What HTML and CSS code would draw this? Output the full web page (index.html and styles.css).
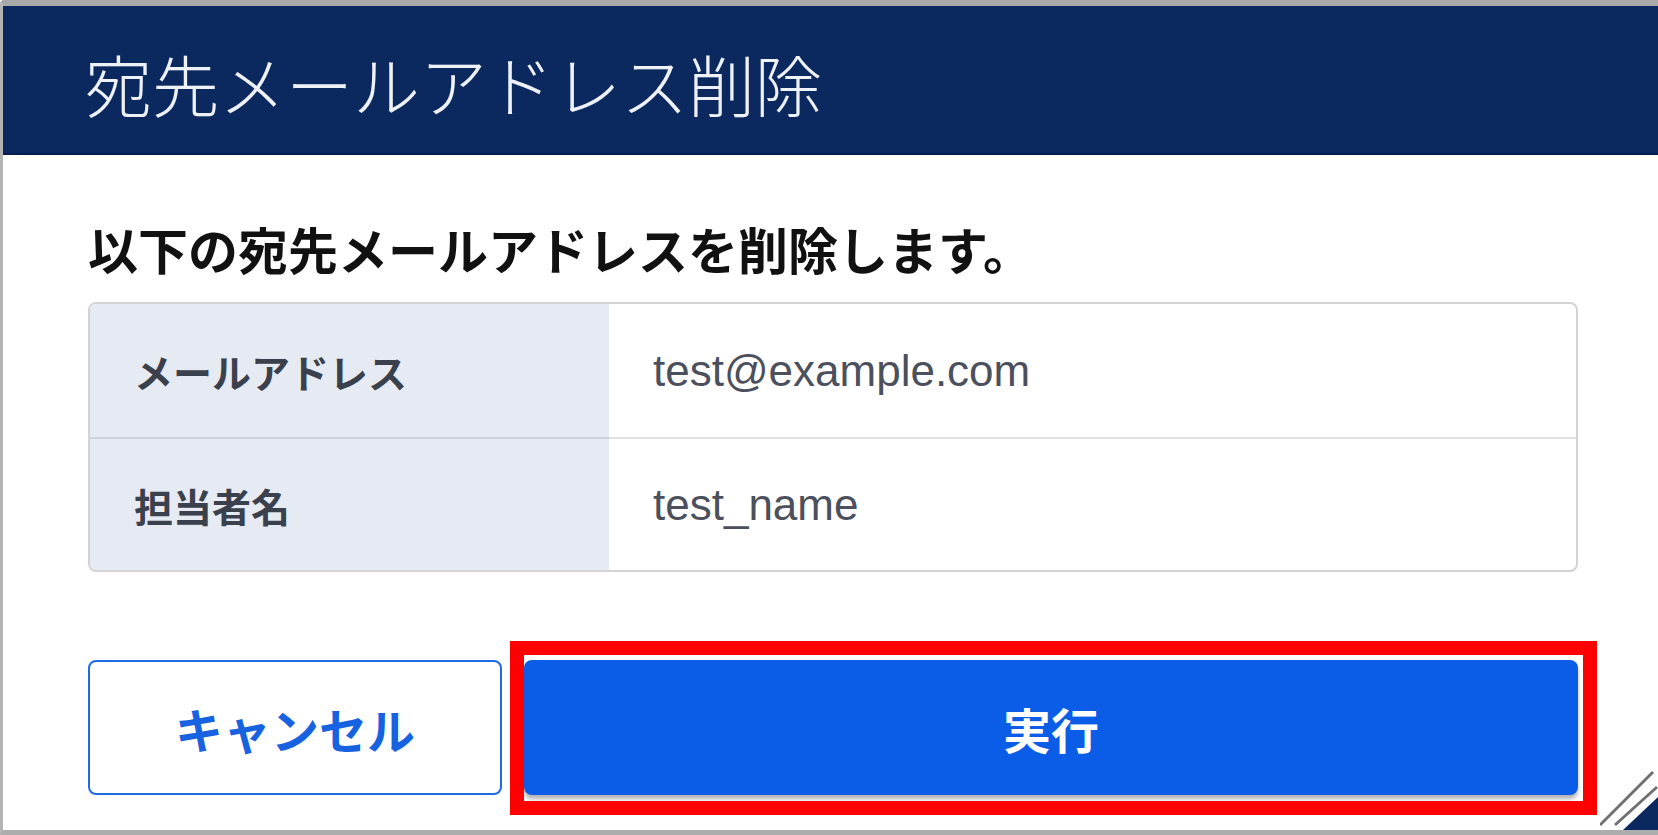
FILE: index.html
```html
<!DOCTYPE html>
<html lang="ja">
<head>
  <meta charset="UTF-8">
  <title>宛先メールアドレス削除</title>
  <link rel="stylesheet" href="styles.css">
</head>
<body>
  <div class="window">
    <div class="dialog-header">
      <h1>宛先メールアドレス削除</h1>
    </div>

    <div class="dialog-body">
      <p class="lead">以下の宛先メールアドレスを削除します。</p>

      <div class="info-table">
        <div class="info-row">
          <div class="info-label">メールアドレス</div>
          <div class="info-value">test@example.com</div>
        </div>
        <div class="info-row">
          <div class="info-label">担当者名</div>
          <div class="info-value">test_name</div>
        </div>
      </div>

      <div class="actions">
        <button class="btn btn-cancel">キャンセル</button>
        <div class="btn-wrap">
          <button class="btn btn-run">実行</button>
          <span class="mark"></span>
        </div>
      </div>
    </div>

    <svg class="grip" width="58" height="60" viewBox="0 0 58 60">
      <line x1="0" y1="55" x2="53" y2="2" stroke="#707070" stroke-width="3"/>
      <line x1="15" y1="55" x2="57" y2="17" stroke="#707070" stroke-width="3"/>
      <polygon points="23,60 58,60 58,27" fill="#0b295f"/>
    </svg>
  </div>
</body>
</html>
```

FILE: styles.css
```css
html, body {
  margin: 0;
  padding: 0;
}

body {
  font-family: "Noto Sans CJK JP", "Noto Sans", sans-serif;
  background: #fff;
  color: #111;
}

.window {
  position: relative;
  height: 835px;
  box-sizing: border-box;
  border-top: 6px solid #a9a9a9;
  border-left: 3px solid #b4b4b4;
  border-bottom: 5px solid #adadad;
  border-top-left-radius: 4px;
  overflow: hidden;
}

.dialog-header {
  height: 149px;
  box-sizing: border-box;
  padding: 6px 0 0 82px;
  display: flex;
  align-items: center;
  background: #0b295f;
  border-bottom: 2px solid #061e4c;
}

.dialog-header h1 {
  margin: 0;
  font-size: 67px;
  font-weight: 300;
  line-height: 1;
  color: #eef1f7;
}

.dialog-body {
  padding: 0 80px 0 85px;
}

.lead {
  margin: 63px 0 0;
  font-size: 50px;
  font-weight: 700;
  line-height: 60px;
  color: #111;
}

.info-table {
  margin-top: 24px;
  border: 2px solid #d3d3d3;
  border-radius: 8px;
  overflow: hidden;
}

.info-row {
  display: flex;
  height: 133px;
}

.info-label {
  flex: 0 0 519px;
  box-sizing: border-box;
  padding-left: 44px;
  display: flex;
  align-items: center;
  background: #e6eaf3;
  font-size: 39px;
  font-weight: 700;
  color: #3b404d;
}

.info-value {
  flex: 1;
  padding-left: 44px;
  display: flex;
  align-items: center;
  font-family: "Liberation Sans", Arial, sans-serif;
  font-size: 44px;
  color: #4b505c;
}

.info-row + .info-row .info-label {
  border-top: 2px solid #cdd1da;
}

.info-row + .info-row .info-value {
  border-top: 2px solid #e0e0e0;
}

.actions {
  display: flex;
  gap: 22px;
  margin-top: 88px;
}

.btn {
  height: 135px;
  border-radius: 8px;
  font-family: inherit;
  font-size: 48px;
  font-weight: 700;
  cursor: pointer;
}

.btn-cancel {
  flex: 0 0 414px;
  background: #fff;
  border: 2px solid #1f6be5;
  color: #1762e0;
}

.btn-wrap {
  flex: 1;
  position: relative;
}

.btn-run {
  width: 100%;
  display: block;
  background: #0b5ce6;
  border: none;
  color: #fff;
  box-shadow: 0 4px 4px rgba(0,0,0,0.3);
}

.mark {
  position: absolute;
  left: -14px;
  top: -19px;
  right: -19px;
  bottom: -20px;
  border: 14px solid #ff0000;
  pointer-events: none;
}

.grip {
  position: absolute;
  right: 0;
  bottom: 0;
  display: block;
}
```
